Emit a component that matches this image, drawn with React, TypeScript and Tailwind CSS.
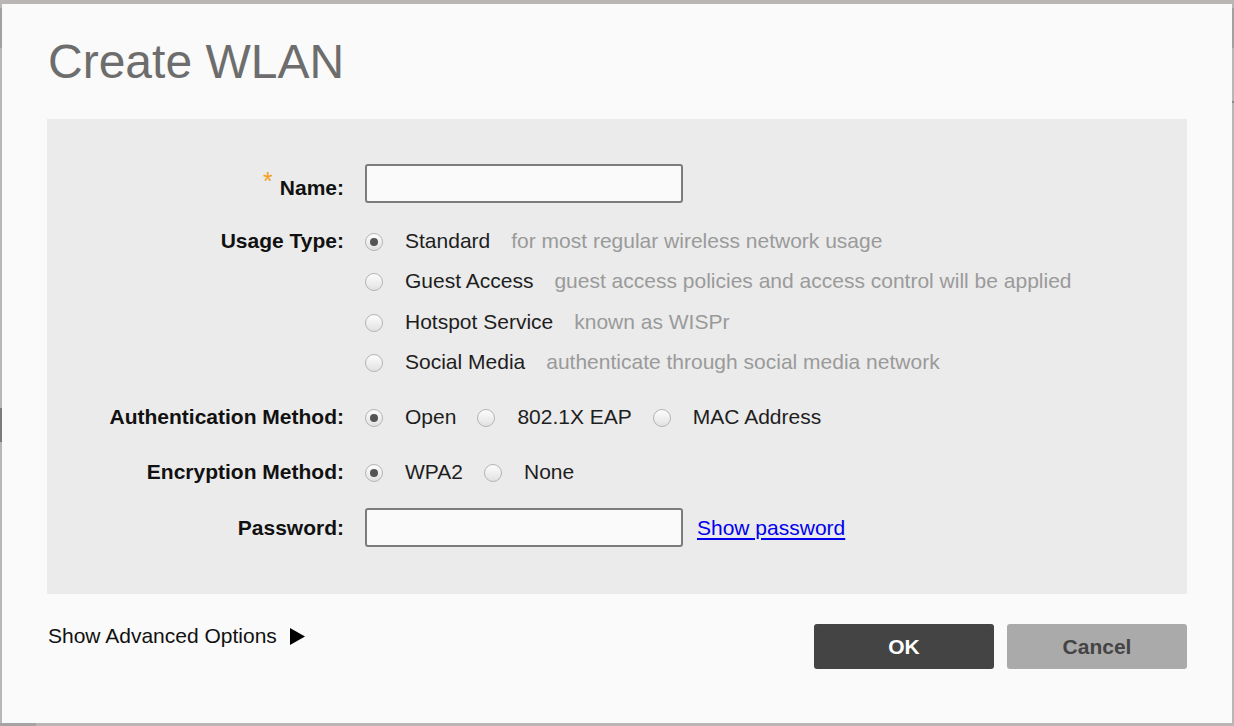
import React from "react";

function Radio({ checked }: { checked?: boolean }) {
  return (
    <span className="relative top-[1px] flex h-[18px] w-[18px] shrink-0 items-center justify-center rounded-full border border-[#b4b4b4] bg-gradient-to-b from-[#fdfdfd] to-[#e2e2e2]">
      {checked && <span className="h-[8px] w-[8px] rounded-full bg-[#555555]" />}
    </span>
  );
}

function Opt({ label, checked, desc }: { label: string; checked?: boolean; desc?: string }) {
  return (
    <div className="flex items-center">
      <Radio checked={checked} />
      <span className="ml-[22px] text-[#1e1e1e]">{label}</span>
      {desc && <span className="ml-[21px] text-[#9a9a9a]">{desc}</span>}
    </div>
  );
}

function Label({ children }: { children: React.ReactNode }) {
  return (
    <div className="w-[297px] shrink-0 text-right font-bold text-[#111111]">{children}</div>
  );
}

export default function App() {
  return (
    <div className="relative h-[726px] w-[1234px] overflow-hidden bg-[#bab6b6] pl-[2px] pt-[4px] font-['Liberation_Sans',Arial,sans-serif] text-[21px] leading-[24px]">
      <div className="absolute left-0 top-[8px] h-[40px] w-[2px] bg-[#a2a0a0]" />
      <div className="absolute left-0 top-[408px] h-[34px] w-[2px] bg-[#7c7a7a]" />
      <div className="absolute right-0 top-[8px] h-[40px] w-[2px] bg-[#a2a0a0]" />
      <div className="absolute right-0 top-[101px] h-[2px] w-[2px] bg-[#8a8888]" />
      <div className="absolute bottom-0 left-0 h-[3px] w-[36px] bg-[#a5a3a3]" />

      <div className="flex h-[719px] w-[1230px] flex-col bg-[#fafafa]">
        <div className="h-[115px] pl-[46px] pt-[34px] text-[48px] leading-[48px] text-[#6d6d6d]">
          Create WLAN
        </div>

        <div className="ml-[45px] flex h-[475px] w-[1140px] flex-col bg-[#ebebeb] pt-[45px]">
          <div className="flex h-[39px] items-center gap-[21px]">
            <Label>
              <span className="relative top-[3px]">
                <span className="relative -top-[5px] mr-[7px] text-[25px] font-normal text-[#f5a01e]">*</span>
                Name:
              </span>
            </Label>
            <div className="h-[39px] w-[318px] rounded-[3px] border-2 border-[#7c7c7c] bg-[#fafafa]" />
          </div>

          <div className="mt-[18px] flex gap-[21px]">
            <div className="flex h-[40px] items-center">
              <Label>Usage Type:</Label>
            </div>
            <div className="flex flex-col">
              <div className="flex h-[40px] items-center">
                <Opt label="Standard" checked desc="for most regular wireless network usage" />
              </div>
              <div className="flex h-[40px] items-center">
                <Opt label="Guest Access" desc="guest access policies and access control will be applied" />
              </div>
              <div className="flex h-[41px] items-center">
                <Opt label="Hotspot Service" desc="known as WISPr" />
              </div>
              <div className="flex h-[40px] items-center">
                <Opt label="Social Media" desc="authenticate through social media network" />
              </div>
            </div>
          </div>

          <div className="mt-[15px] flex h-[40px] items-center gap-[21px]">
            <Label>Authentication Method:</Label>
            <div className="flex items-center gap-[21px]">
              <Opt label="Open" checked />
              <Opt label="802.1X EAP" />
              <Opt label="MAC Address" />
            </div>
          </div>

          <div className="mt-[15px] flex h-[40px] items-center gap-[21px]">
            <Label>Encryption Method:</Label>
            <div className="flex items-center gap-[21px]">
              <Opt label="WPA2" checked />
              <Opt label="None" />
            </div>
          </div>

          <div className="mt-[16px] flex h-[39px] items-center gap-[21px]">
            <Label>Password:</Label>
            <div className="h-[39px] w-[318px] rounded-[3px] border-2 border-[#7c7c7c] bg-[#fafafa]" />
            <a href="#" className="-ml-[7px] text-[#0000ee] underline underline-offset-[3px]">
              Show password
            </a>
          </div>
        </div>

        <div className="ml-[46px] mt-[30px] flex w-[1139px] items-start">
          <div className="flex items-center text-[#111111]">
            <span>Show Advanced Options</span>
            <svg className="ml-[13px]" width="15" height="17" viewBox="0 0 15 17">
              <polygon points="0,0 15,8.5 0,17" fill="#000" />
            </svg>
          </div>
          <div className="ml-auto flex gap-[13px]">
            <button className="h-[45px] w-[180px] rounded-[3px] bg-[#444444] font-bold text-white">OK</button>
            <button className="h-[45px] w-[180px] rounded-[3px] bg-[#aaaaaa] font-bold text-[#444444]">Cancel</button>
          </div>
        </div>
      </div>
    </div>
  );
}
